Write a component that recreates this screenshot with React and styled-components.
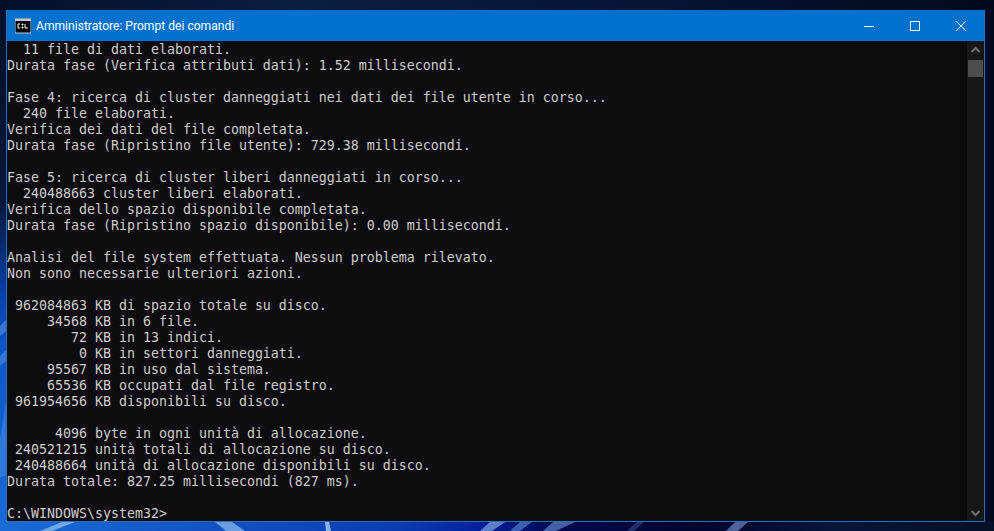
import React from "react";
import styled, { createGlobalStyle } from "styled-components";

const Global = createGlobalStyle`
  html, body { margin: 0; padding: 0; width: 994px; height: 531px; overflow: hidden; }
`;

const Desktop = styled.div`
  position: relative;
  width: 994px;
  height: 531px;
  box-sizing: border-box;
  padding: 10px 9px 9px 6px;
  background: #04122c;
  display: flex;
`;

const Wallpaper = styled.svg`
  position: absolute;
  inset: 0;
  width: 994px;
  height: 531px;
`;

const Win = styled.div`
  position: relative;
  flex: 1;
  display: flex;
  flex-direction: column;
  border: 1px solid #2a70b8;
  border-top: 0;
  min-width: 0;
`;

const TitleBar = styled.div`
  height: 31px;
  background: #0071cc;
  display: flex;
  align-items: center;
  color: #fff;
  font: 12.1px Roboto, "Noto Sans", sans-serif;
`;

const Caption = styled.span`
  margin-left: 5px;
`;

const AppIcon = styled.svg`
  margin-left: 8px;
  width: 16px;
  height: 16px;
`;

const Controls = styled.div`
  margin-left: auto;
  display: flex;
`;

const Control = styled.div`
  width: 46px;
  height: 30px;
  display: flex;
  align-items: center;
  justify-content: center;
`;

const Body = styled.div`
  flex: 1;
  display: flex;
  min-height: 0;
  background: #0c0c0c;
`;

const Console = styled.pre`
  flex: 1;
  margin: 0;
  padding-top: 1px;
  overflow: hidden;
  color: #cccccc;
  font: 13.29px/16px "DejaVu Sans Mono", monospace;
`;

const Scrollbar = styled.div`
  width: 17px;
  background: #171717;
  display: flex;
  flex-direction: column;
  align-items: center;
`;

const Arrow = styled.svg`
  width: 17px;
  height: 19px;
  flex: none;
`;

const Thumb = styled.div`
  width: 15px;
  height: 17px;
  background: #4d4d4d;
  margin-bottom: auto;
`;

const text = `  11 file di dati elaborati.
Durata fase (Verifica attributi dati): 1.52 millisecondi.

Fase 4: ricerca di cluster danneggiati nei dati dei file utente in corso...
  240 file elaborati.
Verifica dei dati del file completata.
Durata fase (Ripristino file utente): 729.38 millisecondi.

Fase 5: ricerca di cluster liberi danneggiati in corso...
  240488663 cluster liberi elaborati.
Verifica dello spazio disponibile completata.
Durata fase (Ripristino spazio disponibile): 0.00 millisecondi.

Analisi del file system effettuata. Nessun problema rilevato.
Non sono necessarie ulteriori azioni.

 962084863 KB di spazio totale su disco.
     34568 KB in 6 file.
        72 KB in 13 indici.
         0 KB in settori danneggiati.
     95567 KB in uso dal sistema.
     65536 KB occupati dal file registro.
 961954656 KB disponibili su disco.

      4096 byte in ogni unità di allocazione.
 240521215 unità totali di allocazione su disco.
 240488664 unità di allocazione disponibili su disco.
Durata totale: 827.25 millisecondi (827 ms).

C:\\WINDOWS\\system32>`;

const streaks = [
  ["40,531 62,522 75,522 52,531", "#8fc0ee", 0.75],
  ["215,522 232,522 245,531 226,531", "#8fc0ee", 0.7],
  ["325,522 329,522 331,531 326,531", "#a9d0f2", 0.8],
  ["480,531 490,522 505,522 492,531", "#7fa8e6", 0.7],
  ["510,531 520,522 532,522 520,531", "#5f8fdc", 0.6],
  ["543,531 553,522 575,522 556,531", "#6f9ae0", 0.6],
  ["627,531 637,522 644,522 634,531", "#4a66b0", 0.45],
  ["726,531 735,522 748,522 738,531", "#7f9fe0", 0.6],
  ["0,326 6,320 6,331 0,336", "#6aa4ea", 0.45],
  ["0,356 6,350 6,361 0,366", "#6aa4ea", 0.4],
  ["0,440 6,400 6,475 0,478", "#4f94e6", 0.45],
];

export default function App() {
  return (
    <>
      <Global />
      <Desktop>
        <Wallpaper viewBox="0 0 994 531">
          <defs>
            <linearGradient id="top" x1="0" x2="1" y1="0" y2="0">
              <stop offset="0" stopColor="#03102a" />
              <stop offset="0.3" stopColor="#0a1e42" />
              <stop offset="0.6" stopColor="#061638" />
              <stop offset="1" stopColor="#020a1e" />
            </linearGradient>
            <linearGradient id="left" x1="0" x2="0" y1="0" y2="1">
              <stop offset="0" stopColor="#03102a" />
              <stop offset="0.38" stopColor="#04183c" />
              <stop offset="0.55" stopColor="#0a3fa8" />
              <stop offset="0.65" stopColor="#0d55c8" />
              <stop offset="1" stopColor="#1a6ad8" />
            </linearGradient>
            <linearGradient id="bottom" x1="0" x2="1" y1="0" y2="0">
              <stop offset="0" stopColor="#1a6ad8" />
              <stop offset="0.1" stopColor="#1660d0" />
              <stop offset="0.4" stopColor="#0a3cb0" />
              <stop offset="0.48" stopColor="#0422a0" />
              <stop offset="0.56" stopColor="#020a50" />
              <stop offset="0.7" stopColor="#020530" />
              <stop offset="0.84" stopColor="#06163a" />
              <stop offset="1" stopColor="#041028" />
            </linearGradient>
          </defs>
          <rect width="994" height="531" fill="url(#top)" />
          <rect x="985" width="9" height="531" fill="#020a20" />
          <rect width="6" height="531" fill="url(#left)" />
          <rect y="522" width="994" height="9" fill="url(#bottom)" />
          {streaks.map(([points, fill, opacity]) => (
            <polygon key={points} points={points} fill={fill} opacity={opacity} />
          ))}
        </Wallpaper>
        <Win>
          <TitleBar>
            <AppIcon viewBox="0 0 16 16">
              <rect x="0" y="1" width="16" height="14" fill="#000" stroke="#c9c9c9" strokeWidth="1" />
              <rect x="0" y="1" width="16" height="2" fill="#c9c9c9" />
              <path d="M5 6H3v4h2M7 6h1v1H7zM7 9h1v1H7zM10 6v4M10 10h3" fill="none" stroke="#fff" />
            </AppIcon>
            <Caption>Amministratore: Prompt dei comandi</Caption>
            <Controls>
              <Control>
                <svg width="10" height="10" viewBox="0 0 10 10"><path d="M0 5.5H10" stroke="#fff" /></svg>
              </Control>
              <Control>
                <svg width="10" height="10" viewBox="0 0 10 10"><rect x=".5" y=".5" width="9" height="9" fill="none" stroke="#fff" /></svg>
              </Control>
              <Control>
                <svg width="10" height="10" viewBox="0 0 10 10"><path d="M0 0L10 10M10 0L0 10" stroke="#fff" /></svg>
              </Control>
            </Controls>
          </TitleBar>
          <Body>
            <Console>{text}</Console>
            <Scrollbar>
              <Arrow viewBox="0 0 17 19"><path d="M4.5 11L8.5 7L12.5 11" fill="none" stroke="#6e6e6e" strokeWidth="2" /></Arrow>
              <Thumb />
              <Arrow viewBox="0 0 17 19"><path d="M4.5 9L8.5 13L12.5 9" fill="none" stroke="#6e6e6e" strokeWidth="2" /></Arrow>
            </Scrollbar>
          </Body>
        </Win>
      </Desktop>
    </>
  );
}
